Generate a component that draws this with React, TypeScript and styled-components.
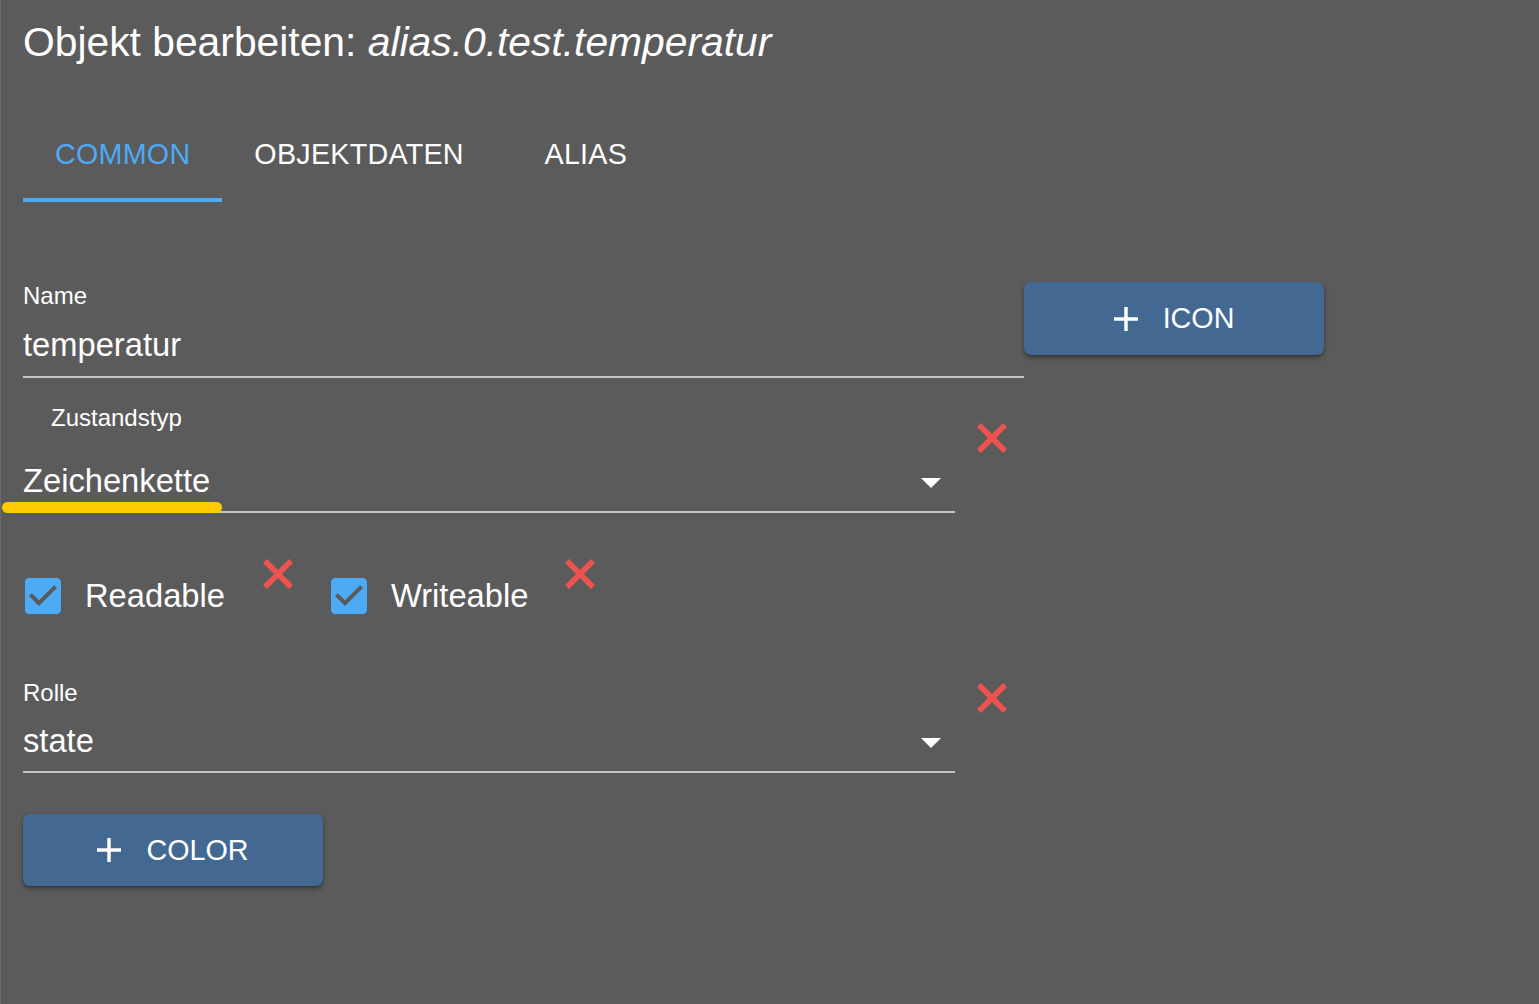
import styled, { createGlobalStyle } from "styled-components";

const GlobalStyle = createGlobalStyle`
  html, body {
    margin: 0;
    padding: 0;
    background: #5b5b5b;
  }
  body {
    font-family: "Liberation Sans", Arial, sans-serif;
    color: #ffffff;
  }
`;

const Page = styled.div`
  min-height: 1004px;
  box-sizing: border-box;
  border-left: 1px solid #6b6b6b;
  padding: 22px 0 0 22px;
  display: flex;
  flex-direction: column;
  align-items: flex-start;
`;

const Title = styled.h1`
  margin: 0;
  font-size: 40.8px;
  font-weight: 400;
  line-height: 41px;
  white-space: nowrap;
  em {
    font-style: italic;
  }
`;

const TabBar = styled.div`
  display: flex;
  margin-top: 43px;
`;

const Tab = styled.div<{ $active?: boolean }>`
  height: 96px;
  min-width: 180px;
  box-sizing: border-box;
  padding: 4px 32px 0;
  display: flex;
  align-items: center;
  justify-content: center;
  font-size: 28.7px;
  letter-spacing: 0.25px;
  text-transform: uppercase;
  color: ${(p) => (p.$active ? "#4dabf5" : "#ffffff")};
  border-bottom: 4px solid ${(p) => (p.$active ? "#4dabf5" : "transparent")};
`;

const Row = styled.div<{ $top: number }>`
  display: flex;
  align-items: flex-start;
  margin-top: ${(p) => p.$top}px;
`;

const Field = styled.div<{ $width: number }>`
  position: relative;
  width: ${(p) => p.$width}px;
  display: flex;
  flex-direction: column;
`;

const Label = styled.label<{ $top?: number; $indent?: number }>`
  display: block;
  font-size: 24px;
  line-height: 24px;
  margin-top: ${(p) => p.$top ?? 0}px;
  margin-left: ${(p) => p.$indent ?? 0}px;
`;

const InputLine = styled.div<{ $top: number; $pad: number }>`
  margin-top: ${(p) => p.$top}px;
  display: flex;
  align-items: center;
  justify-content: space-between;
  font-size: 32.7px;
  line-height: 48px;
  padding-bottom: ${(p) => p.$pad}px;
  border-bottom: 2px solid #c4c4c4;
`;

const Arrow = styled.svg`
  width: 20px;
  height: 10px;
  margin-right: 14px;
  margin-top: 4px;
`;

const Highlight = styled.span`
  position: absolute;
  left: -21px;
  bottom: 0;
  width: 220px;
  height: 11px;
  border-radius: 6px;
  background: #fecc00;
`;

const ActionButton = styled.button<{ $height: number }>`
  width: 300px;
  height: ${(p) => p.$height}px;
  border: none;
  border-radius: 7px;
  background: #436993;
  box-shadow: 0 3px 5px rgba(0, 0, 0, 0.3), 0 1px 2px rgba(0, 0, 0, 0.2);
  color: #ffffff;
  font-family: "Liberation Sans", Arial, sans-serif;
  font-size: 28.7px;
  text-transform: uppercase;
  display: flex;
  align-items: center;
  justify-content: center;
  gap: 25px;
  padding: 0;
`;

const DeleteIcon = styled.svg<{ $left: number; $top: number }>`
  width: 32px;
  height: 32px;
  flex: none;
  margin-left: ${(p) => p.$left}px;
  margin-top: ${(p) => p.$top}px;
`;

const CheckItem = styled.div<{ $left: number }>`
  display: flex;
  align-items: center;
  height: 36px;
  margin-top: 20px;
  margin-left: ${(p) => p.$left}px;
`;

const CheckBox = styled.svg`
  width: 36px;
  height: 36px;
  flex: none;
`;

const CheckLabel = styled.span`
  font-size: 32.7px;
  line-height: 36px;
  margin-left: 24px;
`;

const PlusIcon = () => (
  <svg width="24" height="24" viewBox="5 5 14 14">
    <path d="M19 13h-6v6h-2v-6H5v-2h6V5h2v6h6v2z" fill="#ffffff" />
  </svg>
);

const Close = ({ left, top }: { left: number; top: number }) => (
  <DeleteIcon $left={left} $top={top} viewBox="0 0 32 32">
    <path d="M3 3 29 29 M29 3 3 29" stroke="#ef5350" strokeWidth="5.5" />
  </DeleteIcon>
);

const DropArrow = () => (
  <Arrow viewBox="7 10 10 5">
    <path d="M7 10l5 5 5-5z" fill="#ffffff" />
  </Arrow>
);

const Checked = ({ label, left }: { label: string; left: number }) => (
  <CheckItem $left={left}>
    <CheckBox viewBox="3 3 18 18">
      <path
        d="M19 3H5c-1.11 0-2 .9-2 2v14c0 1.1.89 2 2 2h14c1.11 0 2-.9 2-2V5c0-1.1-.89-2-2-2zm-9 14l-5-5 1.41-1.41L10 14.17l7.59-7.59L19 8l-9 9z"
        fill="#4dabf5"
      />
    </CheckBox>
    <CheckLabel>{label}</CheckLabel>
  </CheckItem>
);

const App = () => {
  return (
    <>
      <GlobalStyle />
      <Page>
        <Title>
          Objekt bearbeiten: <em>alias.0.test.temperatur</em>
        </Title>

        <TabBar>
          <Tab $active>Common</Tab>
          <Tab>Objektdaten</Tab>
          <Tab>Alias</Tab>
        </TabBar>

        <Row $top={80}>
          <Field $width={1001}>
            <Label $top={2}>Name</Label>
            <InputLine $top={13} $pad={7}>
              temperatur
            </InputLine>
          </Field>
          <ActionButton $height={73}>
            <PlusIcon />
            Icon
          </ActionButton>
        </Row>

        <Row $top={28}>
          <Field $width={932}>
            <Label $indent={28}>Zustandstyp</Label>
            <InputLine $top={27} $pad={6}>
              Zeichenkette
              <DropArrow />
            </InputLine>
            <Highlight />
          </Field>
          <Close left={21} top={16} />
        </Row>

        <Row $top={45}>
          <Checked label="Readable" left={2} />
          <Close left={37} top={0} />
          <Checked label="Writeable" left={37} />
          <Close left={36} top={0} />
        </Row>

        <Row $top={67}>
          <Field $width={932}>
            <Label>Rolle</Label>
            <InputLine $top={12} $pad={6}>
              state
              <DropArrow />
            </InputLine>
          </Field>
          <Close left={21} top={1} />
        </Row>

        <Row $top={41}>
          <ActionButton $height={72}>
            <PlusIcon />
            Color
          </ActionButton>
        </Row>
      </Page>
    </>
  );
};

export default App;
